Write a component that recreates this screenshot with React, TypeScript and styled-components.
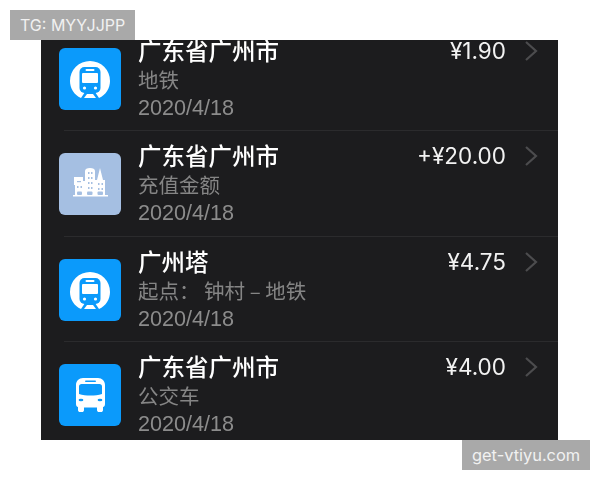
import styled, { createGlobalStyle } from "styled-components";

const GlobalStyle = createGlobalStyle`
	html, body {
		margin: 0;
		padding: 0;
		background: #fff;
	}
`;

const Page = styled.div`
	position: relative;
	width: 600px;
	height: 480px;
	padding: 40px 42px 40px 41px;
	box-sizing: border-box;
	overflow: hidden;
`;

const Panel = styled.div`
	height: 400px;
	background: #1c1c1e;
	overflow: hidden;
`;

const List = styled.div`
	margin-top: -14px;
	filter: blur(0.35px);
`;

const Row = styled.div`
	display: flex;
	align-items: flex-start;
	height: 104.4px;
	padding: 0 20px 0 18px;
	box-sizing: border-box;
`;

const Divider = styled.div`
	height: 1px;
	margin-left: 23px;
	background: #2b2b2d;
`;

const IconBox = styled.div<{ tone: string }>`
	flex: none;
	width: 62px;
	height: 62px;
	margin-top: 22px;
	border-radius: 6px;
	background: ${props => props.tone};
	svg {
		display: block;
	}
`;

const Info = styled.div`
	flex: 1;
	min-width: 0;
	margin-left: 17px;
	padding-top: 9px;
`;

const Title = styled.div`
	height: 30px;
	font: 500 23.5px/30px "Noto Sans CJK SC", sans-serif;
	color: #fff;
	white-space: nowrap;
`;

const Sub = styled.div`
	height: 29px;
	font: 400 20.5px/29px "Noto Sans CJK SC", sans-serif;
	color: #858585;
	white-space: nowrap;
`;

const DateText = styled.div`
	height: 28px;
	font: 400 21.6px/28px "Liberation Sans", sans-serif;
	color: #8c8c8c;
`;

const Amount = styled.div`
	margin-top: 10px;
	font: 400 22.5px/30px "Inter", "Liberation Sans", sans-serif;
	color: #f2f2f2;
	white-space: nowrap;
`;

const Chevron = styled.svg`
	flex: none;
	width: 14px;
	height: 22px;
	margin: 14px 0 0 18px;
`;

const Stamp = styled.div`
	position: absolute;
	height: 30px;
	padding: 0 10px;
	background: #a9a9a9;
	color: #f1f1f1;
	font: 400 16px/30px "Inter", "Liberation Sans", sans-serif;
	white-space: nowrap;
`;

const TopStamp = styled(Stamp)`
	top: 10px;
	left: 10px;
	width: 105px;
`;

const BottomStamp = styled(Stamp)`
	top: 440px;
	left: 462px;
	width: 108px;
	font-size: 16.4px;
`;

const Metro = () => (
	<svg width="62" height="62" viewBox="0 0 62 62">
		<path
			d="M22 50C15 47 11 40 11 33A20 20 0 0 1 51 33C51 40 47 47 40 50L36 44H26Z"
			fill="#fff"
		/>
		<rect x="20.500" y="19" width="21" height="26" rx="5" fill="#0b9afb" />
		<rect x="23" y="25" width="16" height="10" rx="1" fill="#fff" />
		<rect x="26.500" y="21" width="9" height="2" rx="1" fill="#fff" />
		<circle cx="25.500" cy="40" r="1.600" fill="#fff" />
		<circle cx="36.500" cy="40" r="1.600" fill="#fff" />
		<path d="M25 50L28 46H34L37 50Z" fill="#fff" />
	</svg>
);

const Bus = () => (
	<svg width="62" height="62" viewBox="0 0 62 62">
		<path
			d="M24 14H39C43 14 46 17 46 21V40C46 42 45 43 44 43V46C44 47.500 43 48 42 48H40C39 48 38 47.500 38 46V43.500H25V46C25 47.500 24 48 23 48H21C20 48 19 47.500 19 46V43C18 43 17 42 17 40V21C17 17 20 14 24 14Z"
			fill="#fff"
		/>
		<path d="M22.500 20H40.500C42 20 43 21 43 22.500V30C36 32 27 32 20 30V22.500C20 21 21 20 22.500 20Z" fill="#0b9afb" />
		<rect x="26" y="16.500" width="11" height="1.600" rx="0.800" fill="#0b9afb" />
		<ellipse cx="22" cy="36" rx="2.400" ry="1.300" fill="#0b9afb" />
		<ellipse cx="41" cy="36" rx="2.400" ry="1.300" fill="#0b9afb" />
	</svg>
);

const City = () => (
	<svg width="62" height="62" viewBox="0 0 62 62">
		<path
			d="M15 24H24V28H26V18C26 16 28 15 31 15C34 15 36 16 36 18V27H38L41 15L44 27H46V42H49V43.500H14V42H16V32H15Z"
			fill="#fff"
		/>
		<g fill="#a5bfe2">
			<rect x="29" y="19" width="1.500" height="2" />
			<rect x="32" y="19" width="1.500" height="2" />
			<rect x="29" y="24" width="1.500" height="2" />
			<rect x="32" y="24" width="1.500" height="2" />
			<rect x="29" y="29" width="1.500" height="2" />
			<rect x="32" y="29" width="1.500" height="2" />
			<rect x="29" y="34" width="1.500" height="2" />
			<rect x="32" y="34" width="1.500" height="2" />
			<rect x="18" y="28" width="4" height="1.200" />
			<rect x="18" y="33" width="1.500" height="2" />
			<rect x="21.500" y="33" width="1.500" height="2" />
			<rect x="39" y="30" width="1.500" height="2" />
			<rect x="42.500" y="30" width="1.500" height="2" />
			<rect x="39" y="35" width="1.500" height="2" />
			<rect x="42.500" y="35" width="1.500" height="2" />
			<rect x="18" y="38.500" width="5" height="3.500" rx="1" />
			<rect x="28" y="38.500" width="5.500" height="3.500" rx="1" />
			<rect x="38.500" y="38.500" width="5.500" height="3.500" rx="1" />
		</g>
	</svg>
);

const records = [
	{ title: "广东省广州市", sub: "地铁", amount: "¥1.90", tone: "#0b9afb", icon: <Metro /> },
	{ title: "广东省广州市", sub: "充值金额", amount: "+¥20.00", tone: "#a5bfe2", icon: <City /> },
	{ title: "广州塔", sub: "起点： 钟村 – 地铁", amount: "¥4.75", tone: "#0b9afb", icon: <Metro /> },
	{ title: "广东省广州市", sub: "公交车", amount: "¥4.00", tone: "#0b9afb", icon: <Bus /> },
];

const App = () => (
	<Page>
		<GlobalStyle />
		<Panel>
			<List>
				{records.map(({ title, sub, amount, tone, icon }, i) => (
					<div key={i}>
						{i > 0 && <Divider />}
						<Row>
							<IconBox tone={tone}>{icon}</IconBox>
							<Info>
								<Title>{title}</Title>
								<Sub>{sub}</Sub>
								<DateText>2020/4/18</DateText>
							</Info>
							<Amount>{amount}</Amount>
							<Chevron viewBox="0 0 14 22">
								<path d="M2 2L12 11L2 20" fill="none" stroke="#4c4c4e" strokeWidth="2.200" />
							</Chevron>
						</Row>
					</div>
				))}
			</List>
		</Panel>
		<TopStamp>TG: MYYJJPP</TopStamp>
		<BottomStamp>get-vtiyu.com</BottomStamp>
	</Page>
);

export default App;
